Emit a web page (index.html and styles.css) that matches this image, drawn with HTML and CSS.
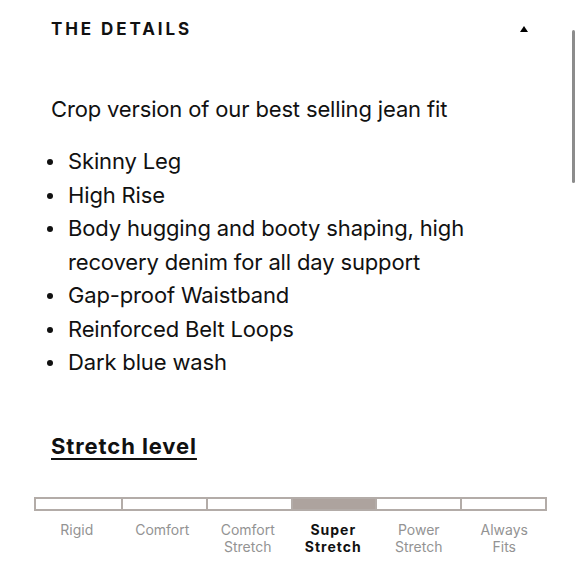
FILE: index.html
```html
<!DOCTYPE html>
<html>
<head>
<meta charset="utf-8">
<link rel="stylesheet" href="styles.css">
</head>
<body>
<div class="page">
  <div class="header">
    <h2 class="title">THE DETAILS</h2>
    <span class="caret"></span>
  </div>
  <p class="intro">Crop version of our best selling jean fit</p>
  <ul class="list">
    <li>Skinny Leg</li>
    <li>High Rise</li>
    <li>Body hugging and booty shaping, high recovery denim for all day support</li>
    <li>Gap-proof Waistband</li>
    <li>Reinforced Belt Loops</li>
    <li>Dark blue wash</li>
  </ul>
  <h3 class="stretch-title">Stretch level</h3>
  <div class="meter">
    <div class="seg"></div>
    <div class="seg"></div>
    <div class="seg"></div>
    <div class="seg active"></div>
    <div class="seg"></div>
    <div class="seg"></div>
  </div>
  <div class="labels">
    <div class="label">Rigid</div>
    <div class="label">Comfort</div>
    <div class="label">Comfort<br>Stretch</div>
    <div class="label active">Super<br>Stretch</div>
    <div class="label">Power<br>Stretch</div>
    <div class="label">Always<br>Fits</div>
  </div>
</div>
<div class="scrollbar"></div>
</body>
</html>
```
FILE: styles.css
```css
html, body {
  margin: 0;
  padding: 0;
  background: #fff;
}
body {
  font-family: Inter, "Noto Sans", sans-serif;
  color: #111;
  width: 580px;
  height: 580px;
  overflow: hidden;
  position: relative;
}
.page {
  padding: 0 0 0 51px;
}
.header {
  display: flex;
  align-items: center;
  justify-content: space-between;
  height: 58px;
  padding-right: 51px;
}
.title {
  margin: 0;
  font-size: 17px;
  font-weight: 700;
  letter-spacing: 2.9px;
  color: #111;
}
.caret {
  width: 0;
  height: 0;
  border-left: 4.5px solid transparent;
  border-right: 4.5px solid transparent;
  border-bottom: 6px solid #000;
  margin-right: 1px;
}
.intro {
  margin: 37px 0 0 0;
  font-size: 22px;
  line-height: 28px;
  letter-spacing: -0.15px;
}
.list {
  list-style: none;
  margin: 22px 0 0 0;
  padding: 0 60px 0 17px;
  font-size: 22px;
  line-height: 33.5px;
  letter-spacing: -0.15px;
}
.list li {
  position: relative;
}
.list li::before {
  content: "";
  position: absolute;
  left: -21px;
  top: 14px;
  width: 6px;
  height: 6px;
  border-radius: 50%;
  background: #111;
}
.stretch-title {
  margin: 52px 0 0 0;
  font-size: 22px;
  font-weight: 700;
  text-decoration: underline;
  text-decoration-thickness: 2px;
  text-underline-offset: 4px;
  line-height: 28px;
  letter-spacing: 0.9px;
}
.meter {
  display: grid;
  grid-template-columns: repeat(6, 1fr);
  margin: 37px 0 0 -17px;
  width: 513px;
  height: 14px;
  box-sizing: border-box;
  border: 2px solid #b3aca8;
  background: #fff;
}
.seg {
  border-left: 2px solid #b3aca8;
}
.seg:first-child {
  border-left: none;
}
.seg.active {
  background: #ada39e;
}
.labels {
  display: grid;
  grid-template-columns: repeat(6, 1fr);
  margin: 10px 0 0 -17px;
  width: 513px;
}
.label {
  text-align: center;
  font-size: 14px;
  line-height: 17px;
  color: #939393;
}
.label.active {
  color: #111;
  font-weight: 700;
  letter-spacing: 1px;
}
.scrollbar {
  position: absolute;
  right: 5px;
  top: 30px;
  width: 3px;
  height: 153px;
  border-radius: 2px;
  background: #8c8c8c;
}
```
